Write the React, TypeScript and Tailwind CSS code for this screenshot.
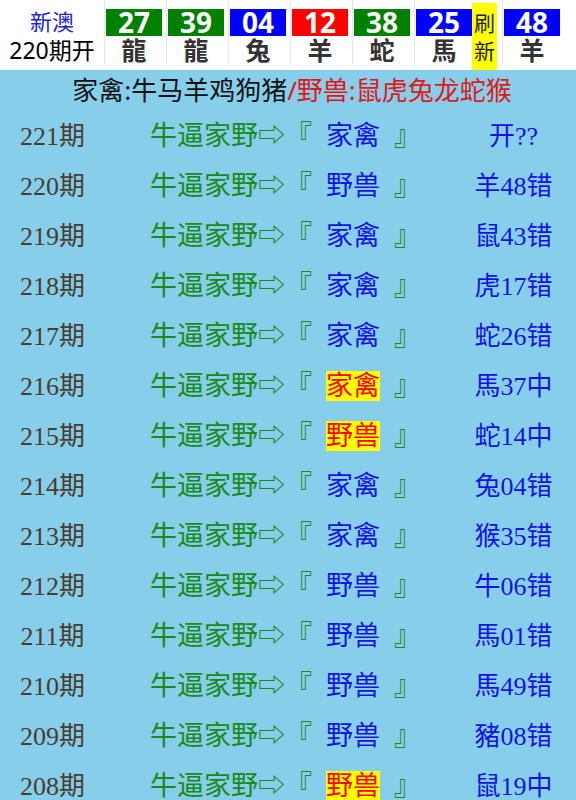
const balls = [
  { num: '27', zodiac: '龍', color: 'bg-[#008000]' },
  { num: '39', zodiac: '龍', color: 'bg-[#008000]' },
  { num: '04', zodiac: '兔', color: 'bg-[#0000ff]' },
  { num: '12', zodiac: '羊', color: 'bg-[#ff0000]' },
  { num: '38', zodiac: '蛇', color: 'bg-[#008000]' },
  { num: '25', zodiac: '馬', color: 'bg-[#0000ff]', narrow: true },
]

const rows = [
  { qi: '221', pick: '家禽', hit: false, result: '开??' },
  { qi: '220', pick: '野兽', hit: false, result: '羊48错' },
  { qi: '219', pick: '家禽', hit: false, result: '鼠43错' },
  { qi: '218', pick: '家禽', hit: false, result: '虎17错' },
  { qi: '217', pick: '家禽', hit: false, result: '蛇26错' },
  { qi: '216', pick: '家禽', hit: true, result: '馬37中' },
  { qi: '215', pick: '野兽', hit: true, result: '蛇14中' },
  { qi: '214', pick: '家禽', hit: false, result: '兔04错' },
  { qi: '213', pick: '家禽', hit: false, result: '猴35错' },
  { qi: '212', pick: '野兽', hit: false, result: '牛06错' },
  { qi: '211', pick: '野兽', hit: false, result: '馬01错' },
  { qi: '210', pick: '野兽', hit: false, result: '馬49错' },
  { qi: '209', pick: '野兽', hit: false, result: '豬08错' },
  { qi: '208', pick: '野兽', hit: true, result: '鼠19中' },
]

function Ball({ num, zodiac, color, narrow }: { num: string; zodiac: string; color: string; narrow?: boolean }) {
  return (
    <div className={`${narrow ? 'w-[58px]' : 'w-[62px]'} shrink-0 flex flex-col pt-[9px] h-[64px] border-l border-gray-200`}>
      <div className={`${color} ml-[1px] w-[56px] h-[27px] flex items-center justify-center text-white font-bold text-[28px] leading-[27px] font-['Noto_Sans',sans-serif]`}>
        {num}
      </div>
      <div className="ml-[1px] w-[56px] h-[28px] flex items-center justify-center text-[#333] font-bold text-[25px] leading-[28px]">
        {zodiac}
      </div>
    </div>
  )
}

export default function App() {
  return (
    <div className="w-[576px] min-h-[800px] bg-[#87ceeb] overflow-hidden font-['Noto_Sans','Noto_Sans_CJK_SC',sans-serif]">
      {/* header */}
      <div className="bg-white h-[70px] flex items-start">
        <div className="w-[104px] shrink-0 flex flex-col items-center pt-[7px] leading-[29px]">
          <div className="text-[#2323c8] text-[22px]">新澳</div>
          <div className="text-black text-[23px]">220期开</div>
        </div>
        {balls.map((b, i) => (
          <Ball key={i} {...b} />
        ))}
        <div className="w-[30px] shrink-0 pt-[3px]">
          <div className="bg-[#ffff00] w-[25px] h-[67px] flex flex-col items-center justify-center text-[21px] leading-[28px] text-[#222]">
            <span>刷</span>
            <span>新</span>
          </div>
        </div>
        <Ball num="48" zodiac="羊" color="bg-[#0000ff]" />
      </div>

      {/* legend */}
      <div className="h-[41px] flex items-center justify-center text-[26px] text-[#111] pl-[8px] whitespace-nowrap">
        <span>家禽:牛马羊鸡狗猪</span>
        <span className="text-[#e01818]">/野兽:鼠虎兔龙蛇猴</span>
      </div>

      {/* list */}
      <div className="font-['Liberation_Serif','Noto_Sans_CJK_SC',serif] text-[26px]">
        {rows.map((r) => (
          <div key={r.qi} className="h-[50px] grid grid-cols-[105px_1fr_125px] items-center">
            <div className="text-center text-[#4a3c30]">{r.qi}期</div>
            <div className="pl-[45px] text-[27px] text-[#1a8a1a] whitespace-nowrap">
              牛逼家野⇨『
              <span className={`mx-[14px] ${r.hit ? 'bg-[#ffff00] text-[#ff0000]' : 'text-[#1414e0]'}`}>{r.pick}</span>
              』
            </div>
            <div className="text-center text-[#1414e0]">{r.result}</div>
          </div>
        ))}
      </div>
    </div>
  )
}
